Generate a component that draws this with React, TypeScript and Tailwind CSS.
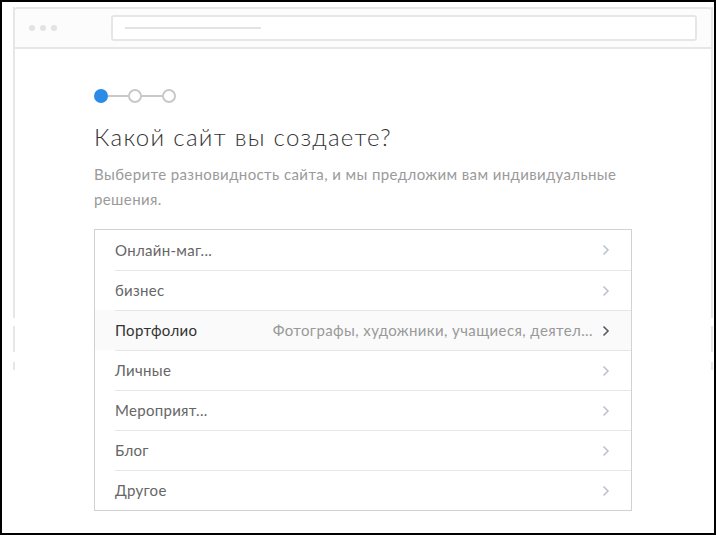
import React from "react";

const items = [
  { label: "Онлайн-маг...", hint: "" },
  { label: "бизнес", hint: "" },
  { label: "Портфолио", hint: "Фотографы, художники, учащиеся, деятел...", active: true },
  { label: "Личные", hint: "" },
  { label: "Мероприят...", hint: "" },
  { label: "Блог", hint: "" },
  { label: "Другое", hint: "" },
];

const Chevron = ({ dark }: { dark?: boolean }) => (
  <svg width="8" height="12" viewBox="0 0 8 12" className="shrink-0">
    <path
      d="M1.5 1.5 L6 6 L1.5 10.5"
      fill="none"
      stroke={dark ? "#555a60" : "#bcc3cc"}
      strokeWidth="1.6"
    />
  </svg>
);

const App = () => {
  return (
    <div
      className="relative w-[716px] h-[535px] overflow-hidden border-2 border-black bg-white pl-[11px] pt-[5px]"
      style={{ fontFamily: "Lato, 'Open Sans', sans-serif" }}
    >
      <div className="relative w-[700px]">
        {/* side borders fade out lower down */}
        <div className="absolute left-0 top-0 w-[2px] h-[311px] bg-[#e6e6e6]" />
        <div className="absolute left-0 top-[319px] w-[2px] h-[26px] bg-[#e6e6e6]" />
        <div className="absolute left-0 top-[355px] w-[2px] h-[8px] bg-[#e6e6e6]" />
        <div className="absolute right-0 top-0 w-[2px] h-[311px] bg-[#e6e6e6]" />
        <div className="absolute right-0 top-[319px] w-[2px] h-[26px] bg-[#e6e6e6]" />
        <div className="absolute right-0 top-[355px] w-[2px] h-[8px] bg-[#e6e6e6]" />

        <div className="flex items-center h-[42px] border-t-2 border-b-2 border-[#e6e6e6] rounded-t-[5px] bg-[#fcfcfc] px-[16px]">
          <div className="flex gap-[5px] w-[83px]">
            <span className="w-[6px] h-[6px] rounded-full bg-[#e3e3e3]" />
            <span className="w-[6px] h-[6px] rounded-full bg-[#e3e3e3]" />
            <span className="w-[6px] h-[6px] rounded-full bg-[#e3e3e3]" />
          </div>
          <div className="flex items-center h-[26px] w-[594px] border-2 border-[#e6e6e6] rounded-[3px] bg-white pl-[12px]">
            <div className="w-[136px] h-[2px] bg-[#e3e3e3]" />
          </div>
        </div>

        <div className="pl-[81px] pt-[40px]">
          <div className="flex items-center">
            <span className="w-[14px] h-[14px] rounded-full bg-[#2b8be6]" />
            <span className="w-[20px] h-[2px] bg-[#c8c8c8]" />
            <span className="w-[14px] h-[14px] rounded-full border-2 border-[#c8c8c8]" />
            <span className="w-[20px] h-[2px] bg-[#c8c8c8]" />
            <span className="w-[14px] h-[14px] rounded-full border-2 border-[#c8c8c8]" />
          </div>

          <h1 className="mt-[19px] text-[24px] leading-[30px] font-light text-[#333] tracking-[1.3px]">
            Какой сайт вы создаете?
          </h1>
          <p className="mt-[10px] w-[545px] text-[15px] leading-[25px] text-[#9a9a9a] tracking-[0.4px]">
            Выберите разновидность сайта, и мы предложим вам индивидуальные решения.
          </p>

          <div className="mt-[17px] w-[538px] border border-[#d2d2d2]">
            {items.map((it, i) => (
              <div
                key={it.label}
                className={`pl-[20px] ${it.active ? "bg-[#fafafa]" : "bg-white"}`}
              >
                <div
                  className={`flex items-center h-[40px] pr-[21px] ${
                    i > 0 ? "border-t border-[#e6e6e6]" : ""
                  }`}
                >
                  <span
                    className={`text-[15px] tracking-[0.3px] ${
                      it.active ? "text-[#333]" : "text-[#666]"
                    }`}
                  >
                    {it.label}
                  </span>
                  <span className="ml-auto mr-[9px] text-[15px] tracking-[0.4px] text-[#999]">
                    {it.hint}
                  </span>
                  <Chevron dark={it.active} />
                </div>
              </div>
            ))}
          </div>
        </div>
      </div>
    </div>
  );
};

export default App;
